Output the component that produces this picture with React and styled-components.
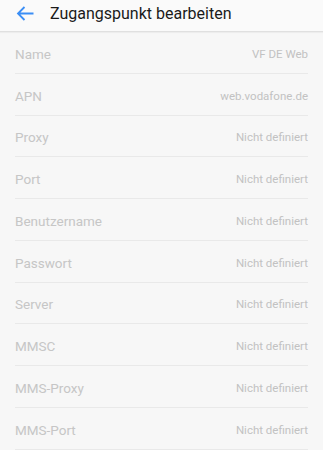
import React from "react";
import styled, { createGlobalStyle } from "styled-components";

const fields = [
  { label: "Name", value: "VF DE Web" },
  { label: "APN", value: "web.vodafone.de" },
  { label: "Proxy", value: "Nicht definiert" },
  { label: "Port", value: "Nicht definiert" },
  { label: "Benutzername", value: "Nicht definiert" },
  { label: "Passwort", value: "Nicht definiert" },
  { label: "Server", value: "Nicht definiert" },
  { label: "MMSC", value: "Nicht definiert" },
  { label: "MMS-Proxy", value: "Nicht definiert" },
  { label: "MMS-Port", value: "Nicht definiert" },
];

const GlobalStyle = createGlobalStyle`
  html, body {
    margin: 0;
    background: #f7f7f7;
    font-family: Roboto, "Liberation Sans", sans-serif;
  }
`;

const Screen = styled.div`
  width: 323px;
  height: 450px;
  overflow: hidden;
  background: #f7f7f7;
`;

const Header = styled.header`
  height: 31px;
  display: flex;
  align-items: center;
  background: #fafafa;
  border-bottom: 1px solid #e0e0e0;
  box-shadow: 0 1px 1px rgba(0, 0, 0, 0.04);
`;

const BackButton = styled.button`
  width: 50px;
  height: 100%;
  padding: 0 0 0 16px;
  border: 0;
  background: none;
  display: flex;
  align-items: center;
  svg {
    display: block;
    margin-top: -4px;
  }
`;

const Title = styled.h1`
  margin: -4px 0 0;
  font-size: 16px;
  font-weight: 400;
  color: #1a1a1a;
`;

const List = styled.div`
  padding: 0 15px;
`;

const Row = styled.div`
  height: 41.75px;
  box-sizing: border-box;
  padding-top: 3px;
  display: flex;
  align-items: center;
  justify-content: space-between;
  border-bottom: 1px solid #e9e9e9;
`;

const Label = styled.span`
  font-size: 13.5px;
  color: #c6c6c6;
`;

const Value = styled.span`
  font-size: 11.5px;
  color: #c2c2c2;
`;

const BackArrow = () => (
  <svg width="18" height="15" viewBox="0 0 18 15" fill="none">
    <path
      d="M17.5 7.5H2M8.5 1L2 7.5L8.5 14"
      stroke="#3b8ef5"
      strokeWidth="1.8"
    />
  </svg>
);

export default function App() {
  return (
    <Screen>
      <GlobalStyle />
      <Header>
        <BackButton aria-label="Zurück">
          <BackArrow />
        </BackButton>
        <Title>Zugangspunkt bearbeiten</Title>
      </Header>
      <List>
        {fields.map((f) => (
          <Row key={f.label}>
            <Label>{f.label}</Label>
            <Value>{f.value}</Value>
          </Row>
        ))}
      </List>
    </Screen>
  );
}
